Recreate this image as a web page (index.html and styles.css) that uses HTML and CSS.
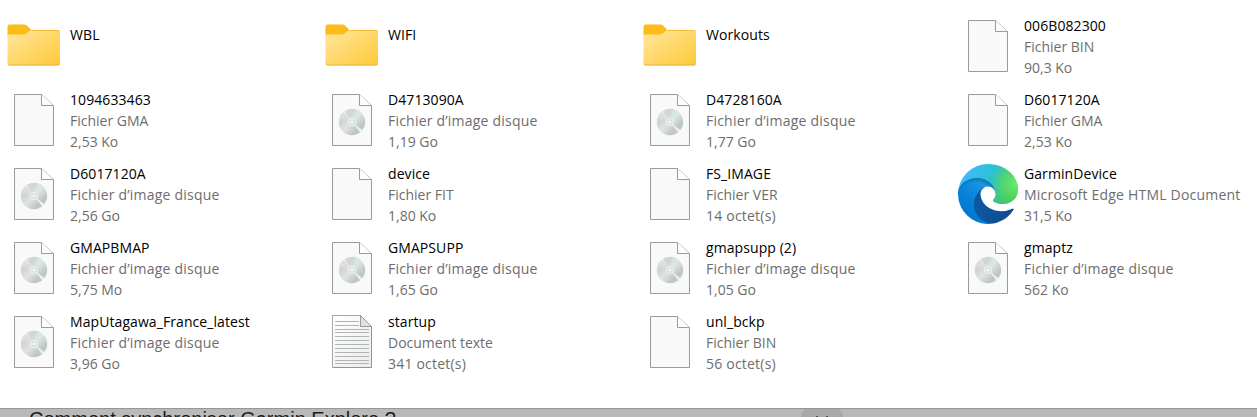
FILE: index.html
```html
<!DOCTYPE html>
<html lang="fr">
<head>
    <meta charset="UTF-8">
    <meta name="viewport" content="width=device-width, initial-scale=1.0">
    <title>Garmin</title>
    <link rel="stylesheet" href="styles.css">
</head>
<body>
    <!-- Icônes partagées -->
    <svg class="defs" width="0" height="0">
        <defs>
            <linearGradient id="g-dossier" x1="0" y1="0" x2="1" y2="1">
                <stop offset="0" stop-color="#ffe79f"/>
                <stop offset="1" stop-color="#ffc937"/>
            </linearGradient>
            <linearGradient id="g-disque" x1="0" y1="0" x2="1" y2="1">
                <stop offset="0" stop-color="#e2e2e4"/>
                <stop offset=".3" stop-color="#ced5d3"/>
                <stop offset=".5" stop-color="#dfe4e3"/>
                <stop offset=".75" stop-color="#bdc6c5"/>
                <stop offset="1" stop-color="#ccd2d2"/>
            </linearGradient>
            <linearGradient id="g-texte" x1="0" y1="0" x2="1" y2="1">
                <stop offset="0" stop-color="#ffffff"/>
                <stop offset="1" stop-color="#ececec"/>
            </linearGradient>
            <linearGradient id="g-edge1" gradientUnits="userSpaceOnUse" x1="59" y1="177" x2="237" y2="177">
                <stop offset="0" stop-color="#0c59a4"/>
                <stop offset="1" stop-color="#114a8b"/>
            </linearGradient>
            <linearGradient id="g-edge2" gradientUnits="userSpaceOnUse" x1="150" y1="85" x2="40" y2="220">
                <stop offset="0" stop-color="#1b9de2"/>
                <stop offset=".25" stop-color="#1595df"/>
                <stop offset=".67" stop-color="#0680d7"/>
                <stop offset="1" stop-color="#0078d4"/>
            </linearGradient>
            <linearGradient id="g-edge3" gradientUnits="userSpaceOnUse" x1="25" y1="60" x2="225" y2="150">
                <stop offset="0" stop-color="#3bbcf9"/>
                <stop offset=".2" stop-color="#36bdec"/>
                <stop offset=".5" stop-color="#2cc2cf"/>
                <stop offset=".75" stop-color="#38c58e"/>
                <stop offset="1" stop-color="#43c254"/>
            </linearGradient>
            <radialGradient id="g-edge4" gradientUnits="userSpaceOnUse" cx="246" cy="85" r="105">
                <stop offset="0" stop-color="#6bee6c"/>
                <stop offset=".35" stop-color="#5fe066" stop-opacity=".85"/>
                <stop offset="1" stop-color="#5fdc62" stop-opacity="0"/>
            </radialGradient>
            <radialGradient id="g-edge5" gradientUnits="userSpaceOnUse" cx="75" cy="160" r="110">
                <stop offset=".72" stop-color="#002f5c" stop-opacity="0"/>
                <stop offset="1" stop-color="#002f5c" stop-opacity=".5"/>
            </radialGradient>
        </defs>

        <symbol id="dossier" viewBox="0 0 54 42">
            <path d="M.5 12V2.500a2 2 0 0 1 2-2h14.600a5 5 0 0 1 2.600.8L24 5.500v5z" fill="#fdbc16"/>
            <path d="M2 10.500h14.500a5 5 0 0 0 3-1L22.500 7a4 4 0 0 1 2.500-1h26a2 2 0 0 1 2 2v31.500a2 2 0 0 1-2 2H2.500a2 2 0 0 1-2-2V12a1.500 1.500 0 0 1 1.500-1.500z" fill="url(#g-dossier)"/>
            <path d="M24.500 6.500H51a1.800 1.800 0 0 1 1.500 1" fill="none" stroke="#f5bd3d"/>
            <path d="M1 39.500a1.800 1.800 0 0 0 1.500 1.500H51a1.800 1.800 0 0 0 1.500-1.500" fill="none" stroke="#efb33a"/>
        </symbol>

        <symbol id="page" viewBox="0 0 40 52">
            <path d="M.5.5h27l12 11v40H.5z" fill="#f9f9f9" stroke="#9b9b9b"/>
            <path d="M27.500.5v11h12" fill="#fdfdfd" stroke="#9b9b9b"/>
        </symbol>

        <symbol id="disque" viewBox="0 0 40 52">
            <use href="#page" width="40" height="52"/>
            <circle cx="20" cy="28" r="13.200" fill="url(#g-disque)"/>
            <path d="M20 28 7.500 24a13.200 13.200 0 0 1 3-5.500z" fill="#e8dcec" opacity=".6"/>
            <path d="m20 28 3-12.800a13.200 13.200 0 0 1 6 3.200z" fill="#d3ebdf" opacity=".7"/>
            <path d="m20 28 10.500 8.200a13.200 13.200 0 0 1-2.200 2.200z" fill="#fff" opacity=".7"/>
            <path d="m20 28-9-9.600 2-1.600z" fill="#f4f7f6" opacity=".5"/>
            <circle cx="20" cy="28" r="3.600" fill="#dce1e0" stroke="#eff2f1"/>
            <circle cx="20" cy="28" r="1.300" fill="#fafafa"/>
        </symbol>

        <symbol id="texte" viewBox="0 0 40 53">
            <path d="M.5.5h28l11 11v41H.5z" fill="url(#g-texte)" stroke="#a3a7a7"/>
            <path d="M1 52.500h38.500V12" fill="none" stroke="#8f9494"/>
            <path d="M3 6.500h24M3 10.500h24M3 14.500h34M3 17.500h34M3 21.500h34M3 25.500h34M3 29.500h34M3 33.500h34M3 37.500h34M3 41.500h34M3 45.500h34M3 48.500h34" stroke="#b0b4b4"/>
            <path d="M28.500.5v11h11z" fill="#e0e2e2" stroke="#969a9a"/>
        </symbol>

        <symbol id="edge" viewBox="0 0 256 256">
            <path fill="url(#g-edge1)" d="M231.070 190.540c-3.430 1.800-6.940 3.400-10.540 4.760a101.950 101.950 0 0 1-35.900 6.460c-47.320 0-88.540-32.550-88.540-74.320a31.480 31.480 0 0 1 16.430-27.300c-42.800 1.800-53.800 46.400-53.800 72.530 0 73.880 68.090 81.370 82.760 81.370 7.910 0 19.840-2.300 27-4.560l1.310-.440a128.340 128.340 0 0 0 66.600-52.800 4 4 0 0 0-5.320-5.700z"/>
            <path id="vague" fill="url(#g-edge2)" d="M105.730 241.420a79.200 79.200 0 0 1-22.740-21.340 80.720 80.720 0 0 1 29.530-119.930c3.120-1.470 8.450-4.130 15.540-4a32.350 32.350 0 0 1 25.690 13 31.880 31.880 0 0 1 6.360 18.660c0-.210 24.460-79.600-80-79.600-43.900 0-80 41.660-80 78.210a130.150 130.150 0 0 0 12.110 56 128 128 0 0 0 156.380 67.110 75.550 75.550 0 0 1-62.780-8z"/>
            <path fill="url(#g-edge5)" d="M105.730 241.420a79.200 79.200 0 0 1-22.740-21.340 80.720 80.720 0 0 1 29.530-119.930c3.120-1.470 8.450-4.130 15.540-4a32.350 32.350 0 0 1 25.690 13 31.880 31.880 0 0 1 6.360 18.660c0-.210 24.460-79.600-80-79.600-43.900 0-80 41.660-80 78.210a130.150 130.150 0 0 0 12.110 56z"/>
            <path fill="url(#g-edge3)" d="M152.330 148.860c-.810 1.050-3.300 2.500-3.300 5.660 0 2.610 1.700 5.120 4.720 7.230 14.380 10 41.490 8.680 41.560 8.680a59.560 59.560 0 0 0 30.270-8.350A61.380 61.380 0 0 0 256 109.200c.260-22.410-8-37.310-11.340-43.910C223.460 23.840 177.720 0 128 0A128 128 0 0 0 0 126.200c.480-36.540 36.800-66.050 80-66.050 3.500 0 23.460.340 42 10.070 16.340 8.580 24.900 18.940 30.850 29.210 6.180 10.670 7.280 24.150 7.280 29.520s-2.740 13.330-7.800 19.910z"/>
            <path fill="url(#g-edge4)" d="M152.330 148.860c-.810 1.050-3.300 2.500-3.300 5.660 0 2.610 1.700 5.120 4.720 7.230 14.380 10 41.490 8.680 41.560 8.680a59.560 59.560 0 0 0 30.270-8.350A61.380 61.380 0 0 0 256 109.200c.260-22.410-8-37.310-11.340-43.910C223.460 23.840 177.720 0 128 0A128 128 0 0 0 0 126.200c.480-36.540 36.800-66.050 80-66.050 3.500 0 23.460.340 42 10.070 16.340 8.580 24.900 18.940 30.850 29.210 6.180 10.670 7.280 24.150 7.280 29.520s-2.740 13.330-7.800 19.910z"/>
        </symbol>
    </svg>

    <main class="explorateur">
        <div class="fichier">
            <div class="icone"><svg class="dossier"><use href="#dossier"/></svg></div>
            <div class="infos simple"><p class="nom">WBL</p></div>
        </div>
        <div class="fichier">
            <div class="icone"><svg class="dossier"><use href="#dossier"/></svg></div>
            <div class="infos simple"><p class="nom">WIFI</p></div>
        </div>
        <div class="fichier">
            <div class="icone"><svg class="dossier"><use href="#dossier"/></svg></div>
            <div class="infos simple"><p class="nom">Workouts</p></div>
        </div>
        <div class="fichier">
            <div class="icone"><svg class="page"><use href="#page"/></svg></div>
            <div class="infos"><p class="nom">006B082300</p><p>Fichier BIN</p><p>90,3 Ko</p></div>
        </div>

        <div class="fichier">
            <div class="icone"><svg class="page"><use href="#page"/></svg></div>
            <div class="infos"><p class="nom">1094633463</p><p>Fichier GMA</p><p>2,53 Ko</p></div>
        </div>
        <div class="fichier">
            <div class="icone"><svg class="page"><use href="#disque"/></svg></div>
            <div class="infos"><p class="nom">D4713090A</p><p class="type-long">Fichier d’image disque</p><p>1,19 Go</p></div>
        </div>
        <div class="fichier">
            <div class="icone"><svg class="page"><use href="#disque"/></svg></div>
            <div class="infos"><p class="nom">D4728160A</p><p class="type-long">Fichier d’image disque</p><p>1,77 Go</p></div>
        </div>
        <div class="fichier">
            <div class="icone"><svg class="page"><use href="#page"/></svg></div>
            <div class="infos"><p class="nom">D6017120A</p><p>Fichier GMA</p><p>2,53 Ko</p></div>
        </div>

        <div class="fichier">
            <div class="icone"><svg class="page"><use href="#disque"/></svg></div>
            <div class="infos"><p class="nom">D6017120A</p><p class="type-long">Fichier d’image disque</p><p>2,56 Go</p></div>
        </div>
        <div class="fichier">
            <div class="icone"><svg class="page"><use href="#page"/></svg></div>
            <div class="infos"><p class="nom">device</p><p>Fichier FIT</p><p>1,80 Ko</p></div>
        </div>
        <div class="fichier">
            <div class="icone"><svg class="page"><use href="#page"/></svg></div>
            <div class="infos"><p class="nom">FS_IMAGE</p><p>Fichier VER</p><p class="type-long">14 octet(s)</p></div>
        </div>
        <div class="fichier">
            <div class="icone"><svg class="edge"><use href="#edge"/></svg></div>
            <div class="infos"><p class="nom">GarminDevice</p><p class="type-long">Microsoft Edge HTML Document</p><p>31,5 Ko</p></div>
        </div>

        <div class="fichier">
            <div class="icone"><svg class="page"><use href="#disque"/></svg></div>
            <div class="infos"><p class="nom">GMAPBMAP</p><p class="type-long">Fichier d’image disque</p><p>5,75 Mo</p></div>
        </div>
        <div class="fichier">
            <div class="icone"><svg class="page"><use href="#disque"/></svg></div>
            <div class="infos"><p class="nom">GMAPSUPP</p><p class="type-long">Fichier d’image disque</p><p>1,65 Go</p></div>
        </div>
        <div class="fichier">
            <div class="icone"><svg class="page"><use href="#disque"/></svg></div>
            <div class="infos"><p class="nom">gmapsupp (2)</p><p class="type-long">Fichier d’image disque</p><p>1,05 Go</p></div>
        </div>
        <div class="fichier">
            <div class="icone"><svg class="page"><use href="#disque"/></svg></div>
            <div class="infos"><p class="nom">gmaptz</p><p class="type-long">Fichier d’image disque</p><p>562 Ko</p></div>
        </div>

        <div class="fichier">
            <div class="icone"><svg class="page"><use href="#disque"/></svg></div>
            <div class="infos"><p class="nom">MapUtagawa_France_latest</p><p class="type-long">Fichier d’image disque</p><p>3,96 Go</p></div>
        </div>
        <div class="fichier">
            <div class="icone"><svg class="page texte"><use href="#texte"/></svg></div>
            <div class="infos"><p class="nom">startup</p><p>Document texte</p><p class="type-long">341 octet(s)</p></div>
        </div>
        <div class="fichier">
            <div class="icone"><svg class="page"><use href="#page"/></svg></div>
            <div class="infos"><p class="nom">unl_bckp</p><p>Fichier BIN</p><p class="type-long">56 octet(s)</p></div>
        </div>
    </main>

    <!-- Haut de la page située derrière la fenêtre -->
    <footer class="arriere-plan">
        <span class="question">Comment synchroniser Garmin Explore ?</span>
        <span class="rond">
            <svg width="12" height="12" viewBox="0 0 12 12"><path d="m0 0 12 12M12 0 0 12" stroke="#4c4c4c" stroke-width="2"/></svg>
        </span>
    </footer>
</body>
</html>
```

FILE: styles.css
```css
* {
    box-sizing: border-box;
}

body {
    margin: 0;
    height: 417px;
    overflow: hidden;
    background-color: #fff;
    font-family: "Open Sans", "Noto Sans", sans-serif;
    font-size: 14px;
    color: #6d6d6d;
    display: flex;
    flex-direction: column;
}

.defs {
    position: absolute;
}

.explorateur {
    flex: none;
    height: 408px;
    padding: 9px 0 0 2px;
    display: grid;
    grid-template-columns: repeat(4, 318px);
    grid-auto-rows: 74px;
    align-content: start;
}

.fichier {
    display: flex;
    gap: 4px;
}

.icone {
    width: 64px;
    height: 74px;
    display: flex;
    align-items: center;
    justify-content: center;
}

.dossier {
    width: 54px;
    height: 42px;
    margin-bottom: 2px;
}

.page {
    width: 40px;
    height: 52px;
}

.page.texte {
    height: 53px;
    margin-bottom: 1px;
}

.edge {
    width: 60px;
    height: 60px;
}

.infos {
    padding-top: 6px;
    white-space: nowrap;
}

.infos.simple {
    padding-top: 15px;
}

.infos p {
    margin: 0;
    line-height: 21px;
}

.infos .nom {
    color: #000;
    letter-spacing: 0.08px;
}

.infos .type-long {
    letter-spacing: 0.21px;
}

.arriere-plan {
    flex: none;
    height: 9px;
    overflow: hidden;
    display: flex;
    align-items: flex-start;
    background-color: #b9b9b9;
    border-top: 1px solid #979797;
    padding-left: 29px;
}

.question {
    width: 771px;
    font-family: "Liberation Sans", Arial, sans-serif;
    font-size: 20px;
    line-height: 21px;
    color: #1c1c1c;
    white-space: nowrap;
}

.rond {
    width: 44px;
    height: 44px;
    border-radius: 50%;
    margin-top: -9px;
    flex: none;
    display: flex;
    align-items: center;
    justify-content: center;
    background-color: #a9a9a9;
}
```
